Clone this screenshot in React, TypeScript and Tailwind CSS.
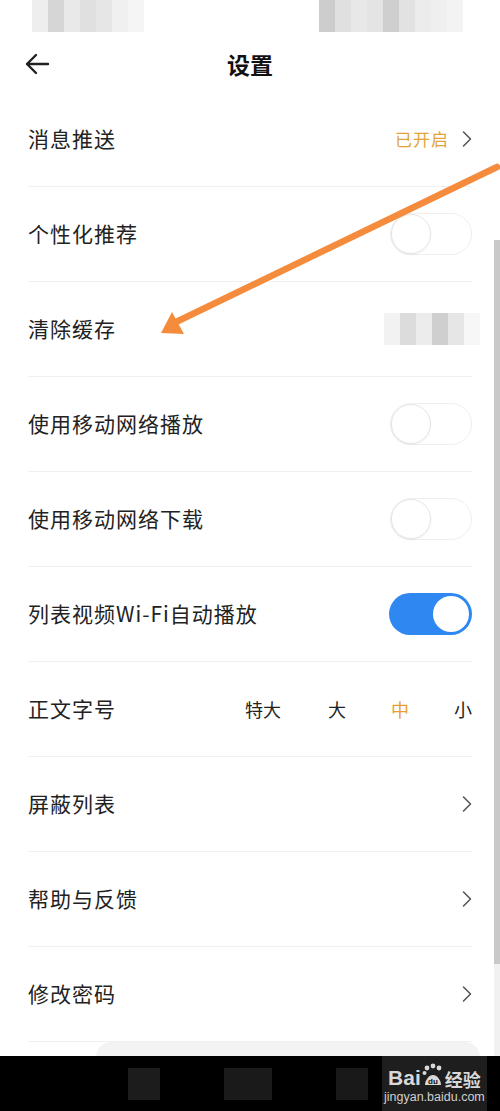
import { ChevronRight } from 'lucide-react';

const FONT = { fontFamily: '"Noto Sans CJK SC", "Noto Sans", sans-serif' };

function Toggle({ on }: { on?: boolean }) {
    if (on) {
        return (
            <div className="w-[83px] h-[42px] rounded-full bg-[#2f87f1] flex items-center justify-end pr-[3px]">
                <div className="w-[36px] h-[36px] rounded-full bg-white" />
            </div>
        );
    }
    return (
        <div className="w-[82px] h-[42px] rounded-full border border-[#efefef] bg-white flex items-center">
            <div className="w-[40px] h-[40px] rounded-full bg-white border border-[#e6e6e6] shadow-[0_1px_2px_rgba(0,0,0,0.05)]" />
        </div>
    );
}

function Row({ label, children }: { label: string; children?: React.ReactNode }) {
    return (
        <div className="mx-[28px] h-[95px] border-b border-[#f0f0f0] flex items-center justify-between">
            <span className="text-[21px] text-[#222] tracking-[1px]">{label}</span>
            <div className="flex items-center">{children}</div>
        </div>
    );
}

const Chevron = () => <ChevronRight className="w-[28px] h-[28px] text-[#555] -mr-[9px]" strokeWidth={1.3} />;

function Mosaic({ cells }: { cells: string[] }) {
    return (
        <div className="flex">
            {cells.map((c, i) => (
                <div key={i} className="w-[16px] h-[32px]" style={{ background: c }} />
            ))}
        </div>
    );
}

export default function App() {
    return (
        <div className="relative w-[500px] h-[1111px] bg-white overflow-hidden" style={FONT}>
            {/* status bar (blurred) */}
            <div className="h-[36px] flex justify-between pl-[32px] pr-[37px]">
                <Mosaic cells={['#eeeeee', '#d6d6d6', '#e9e9e9', '#e0e0e0', '#e6e6e6', '#f0f0f0', '#f5f5f5']} />
                <Mosaic cells={['#cdcdcd', '#e0e0e0', '#e8e8e8', '#e4e4e4', '#cfcfcf', '#e2e2e2', '#ececec', '#efefef', '#f3f3f3']} />
            </div>

            {/* header */}
            <div className="h-[56px] relative flex items-center justify-center">
                <svg className="absolute left-[24px] top-[17px]" width="26" height="22" viewBox="0 0 26 22" fill="none">
                    <path d="M24 11H3M12 2L3 11l9 9" stroke="#222" strokeWidth="2.4" strokeLinecap="round" strokeLinejoin="round" />
                </svg>
                <span className="text-[23px] font-bold text-[#111]">设置</span>
            </div>

            <Row label="消息推送">
                <span className="text-[17px] text-[#e0a43a] mr-[4px] tracking-[1px]">已开启</span>
                <Chevron />
            </Row>
            <Row label="个性化推荐"><Toggle /></Row>
            <Row label="清除缓存">
                <div className="flex mr-[-8px]">
                    {['#f2f2f2', '#dcdcdc', '#ececec', '#cfcfcf', '#e6e6e6', '#f7f7f7'].map((c, i) => (
                        <div key={i} className="w-[16px] h-[32px]" style={{ background: c }} />
                    ))}
                </div>
            </Row>
            <Row label="使用移动网络播放"><Toggle /></Row>
            <Row label="使用移动网络下载"><Toggle /></Row>
            <Row label="列表视频Wi-Fi自动播放"><Toggle on /></Row>
            <Row label="正文字号">
                <div className="flex items-center gap-[45px] text-[18px] text-[#222]">
                    <span className="mr-[2px]">特大</span>
                    <span>大</span>
                    <span className="text-[#e8a030]">中</span>
                    <span>小</span>
                </div>
            </Row>
            <Row label="屏蔽列表"><Chevron /></Row>
            <Row label="帮助与反馈"><Chevron /></Row>
            <Row label="修改密码"><Chevron /></Row>

            {/* faint sheet edge */}
            <div className="h-[15px] mx-[96px] mr-[20px] rounded-t-[40px] bg-[#f3f3f3]" />

            {/* bottom nav (blurred) */}
            <div className="absolute left-0 right-0 bottom-0 h-[55px] bg-black flex items-center">
                <div className="ml-[128px] w-[32px] h-[32px] bg-[#1c1c1c]" />
                <div className="ml-[64px] w-[48px] h-[32px] bg-[#1a1a1a]" />
                <div className="ml-[64px] w-[32px] h-[32px] bg-[#191919]" />
                <div className="ml-[14px] px-[2px] h-[55px] bg-[#1e1e1e] flex flex-col items-center justify-center leading-none">
                    <div className="flex items-end text-[#d8d8d8]">
                        <span className="text-[21px] font-bold" style={{ fontFamily: '"Liberation Sans", sans-serif' }}>Bai</span>
                        <svg width="22" height="24" viewBox="0 0 22 24" className="mx-[1px] mb-[1px]">
                            <circle cx="5" cy="5" r="2.4" fill="#d8d8d8" />
                            <circle cx="11" cy="3" r="2.4" fill="#d8d8d8" />
                            <circle cx="17" cy="5" r="2.4" fill="#d8d8d8" />
                            <circle cx="2.5" cy="10" r="2" fill="#d8d8d8" />
                            <path d="M3 22c0-5 4-10 8-10s8 5 8 10z" fill="#d8d8d8" />
                            <text x="11" y="21" textAnchor="middle" fontSize="8" fontWeight="bold" fill="#111" fontFamily="Liberation Sans, sans-serif">du</text>
                        </svg>
                        <span className="text-[18px] font-bold">经验</span>
                    </div>
                    <span className="text-[12.5px] text-[#d0d0d0] mt-[3px]" style={{ fontFamily: '"Liberation Sans", sans-serif' }}>jingyan.baidu.com</span>
                </div>
            </div>

            {/* scrollbar */}
            <div className="absolute right-0 top-[240px] w-[6px] h-[724px] bg-[#c9c9c9]" />
            <div className="absolute right-0 top-[964px] w-[6px] h-[92px] bg-[#f1f1f1]" />

            {/* annotation arrow */}
            <svg className="absolute left-0 top-0 pointer-events-none" width="500" height="400" viewBox="0 0 500 400">
                <line x1="497" y1="167" x2="176" y2="322" stroke="#f58b3c" strokeWidth="6.5" strokeLinecap="round" />
                <polygon points="161,333 172,312 184,334" fill="#f58b3c" />
            </svg>
        </div>
    );
}
